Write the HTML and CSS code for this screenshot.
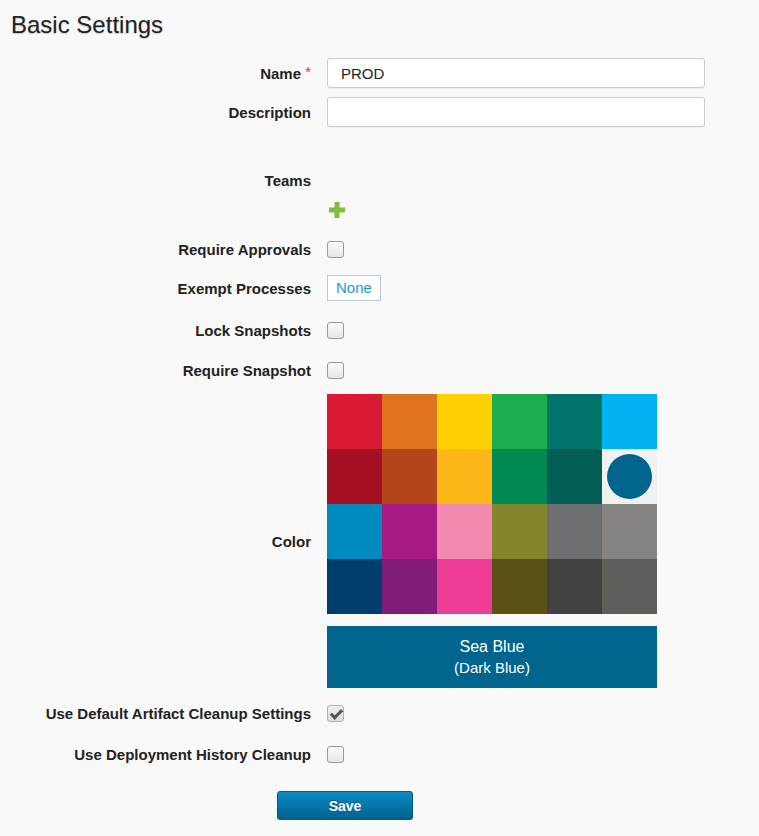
FILE: index.html
```html
<!DOCTYPE html>
<html lang="en">
<head>
<meta charset="UTF-8" />
<meta name="viewport" content="width=device-width, initial-scale=1" />
<title>Basic Settings</title>
<link rel="stylesheet" href="styles.css">
</head>
<body>
  <div class="page">
    <h1 class="title">Basic Settings</h1>

    <!-- NAME / DESCRIPTION -->
    <div class="row row-name">
      <label class="label" for="name">Name <span class="req">*</span></label>
      <div class="field"><input class="text" id="name" type="text" value="PROD"></div>
    </div>
    <div class="row row-desc">
      <label class="label" for="desc">Description</label>
      <div class="field"><input class="text" id="desc" type="text"></div>
    </div>

    <!-- TEAMS -->
    <div class="row row-teams">
      <div class="label">Teams</div>
      <div class="field"></div>
    </div>
    <div class="row row-plus">
      <div class="label"></div>
      <div class="field">
        <svg class="plus" width="18" height="18" viewBox="0 0 18 18">
          <path d="M6.5 1h5v5.5H17v5h-5.5V17h-5v-5.5H1v-5h5.5z" fill="#82bc3f"/>
        </svg>
      </div>
    </div>

    <div class="row row-approvals">
      <label class="label">Require Approvals</label>
      <div class="field"><input type="checkbox" class="check"></div>
    </div>
    <div class="row row-exempt">
      <div class="label">Exempt Processes</div>
      <div class="field"><span class="none-box">None</span></div>
    </div>
    <div class="row row-lock">
      <label class="label">Lock Snapshots</label>
      <div class="field"><input type="checkbox" class="check"></div>
    </div>
    <div class="row row-snapshot">
      <label class="label">Require Snapshot</label>
      <div class="field"><input type="checkbox" class="check"></div>
    </div>

    <!-- COLOR -->
    <div class="row row-color">
      <div class="label">Color</div>
      <div class="field">
        <div class="swatches">
          <div class="swatch" style="background:#da1a32"></div>
          <div class="swatch" style="background:#de741e"></div>
          <div class="swatch" style="background:#ffd100"></div>
          <div class="swatch" style="background:#1aaf4c"></div>
          <div class="swatch" style="background:#00746b"></div>
          <div class="swatch" style="background:#00b3f0"></div>
          <div class="swatch" style="background:#a50f22"></div>
          <div class="swatch" style="background:#b44419"></div>
          <div class="swatch" style="background:#feb718"></div>
          <div class="swatch" style="background:#008852"></div>
          <div class="swatch" style="background:#005e57"></div>
          <div class="swatch selected"><span class="dot"></span></div>
          <div class="swatch" style="background:#008bbf"></div>
          <div class="swatch" style="background:#a81a86"></div>
          <div class="swatch" style="background:#f28ab0"></div>
          <div class="swatch" style="background:#84842c"></div>
          <div class="swatch" style="background:#6d6e70"></div>
          <div class="swatch" style="background:#858480"></div>
          <div class="swatch" style="background:#003f6b"></div>
          <div class="swatch" style="background:#811c7b"></div>
          <div class="swatch" style="background:#ee3d96"></div>
          <div class="swatch" style="background:#5b5115"></div>
          <div class="swatch" style="background:#414141"></div>
          <div class="swatch" style="background:#605e5a"></div>
        </div>
        <div class="color-name">
          <div class="color-main">Sea Blue</div>
          <div class="color-sub">(Dark Blue)</div>
        </div>
      </div>
    </div>

    <!-- CLEANUP -->
    <div class="row row-artifact">
      <label class="label">Use Default Artifact Cleanup Settings</label>
      <div class="field"><input type="checkbox" class="check" checked></div>
    </div>
    <div class="row row-history">
      <label class="label">Use Deployment History Cleanup</label>
      <div class="field"><input type="checkbox" class="check"></div>
    </div>

    <div class="actions">
      <button class="save">Save</button>
    </div>
  </div>
</body>
</html>
```

FILE: styles.css
```css
html, body {
  margin: 0;
  padding: 0;
  background: #f9f9f9;
  color: #222;
  font-family: 'Liberation Sans', Arial, sans-serif;
  font-size: 14px;
}
.page {
  padding: 11px 0 0 0;
}
.title {
  margin: 0 0 0 11px;
  height: 47px;
  font-size: 24px;
  font-weight: normal;
  line-height: 28px;
  color: #222;
  text-shadow: 0 1px 1px rgba(0,0,0,0.2);
}
.row {
  display: flex;
  align-items: center;
  height: 26px;
}
.label {
  width: 311px;
  text-align: right;
  font-size: 15px;
  font-weight: bold;
  color: #222;
  flex-shrink: 0;
}
.field {
  margin-left: 16px;
  display: flex;
  align-items: center;
}
.req {
  color: #e8332f;
  font-size: 15px;
  font-weight: normal;
  position: relative;
  top: -2px;
}
.row-name { height: 30px; }
.row-desc { height: 30px; margin-top: 9px; }
.row-teams { height: 20px; margin-top: 43px; }
.row-plus { height: 20px; margin-top: 10px; }
.row-approvals { margin-top: 16px; }
.row-exempt { margin-top: 13px; }
.row-lock { margin-top: 16px; }
.row-snapshot { margin-top: 14px; }
.row-color { height: auto; margin-top: 11px; }
.row-color .field { flex-direction: column; align-items: stretch; }
.row-artifact { margin-top: 12px; }
.row-history { margin-top: 15px; }

.text {
  box-sizing: border-box;
  width: 378px;
  height: 30px;
  margin: 0;
  padding: 0 13px;
  border: 1px solid #cccccc;
  border-radius: 3px;
  background: #fff;
  font-family: inherit;
  font-size: 15px;
  color: #222;
  box-shadow: 0 1px 1px rgba(0,0,0,0.04);
}
.plus {
  display: block;
  margin-left: 1px;
}
.check {
  appearance: none;
  -webkit-appearance: none;
  box-sizing: border-box;
  width: 17px;
  height: 17px;
  margin: 0;
  border: 1px solid #9a9a9a;
  border-radius: 3px;
  background: linear-gradient(#fbfbfb, #e6e6e6);
  cursor: pointer;
  position: relative;
}
.check:checked {
  background: linear-gradient(#eeeeee, #dcdcdc);
  border-color: #b0b0b0;
}
.check:checked::after {
  content: '';
  position: absolute;
  left: 5px;
  top: 1px;
  width: 4px;
  height: 9px;
  border: solid #555;
  border-width: 0 3px 3px 0;
  transform: rotate(45deg);
}
.none-box {
  box-sizing: border-box;
  display: inline-block;
  height: 26px;
  line-height: 24px;
  padding: 0 8px;
  border: 1px solid #b9c9d6;
  background: #fff;
  color: #1d9ad6;
  font-size: 15px;
}
.swatches {
  display: grid;
  grid-template-columns: repeat(6, 55px);
  grid-auto-rows: 55px;
  width: 330px;
}
.swatch.selected {
  background: #f1f1f1;
  display: flex;
  align-items: center;
  justify-content: center;
}
.dot {
  width: 45px;
  height: 45px;
  border-radius: 50%;
  background: #00648c;
}
.color-name {
  width: 330px;
  height: 62px;
  margin-top: 12px;
  background: #00648c;
  color: #fff;
  text-align: center;
  box-sizing: border-box;
  padding-top: 11px;
}
.color-main {
  font-size: 16px;
  line-height: 20px;
}
.color-sub {
  font-size: 15px;
  line-height: 22px;
}
.actions {
  margin-top: 24px;
  padding-left: 277px;
}
.save {
  width: 136px;
  height: 29px;
  border: 1px solid #005a85;
  border-radius: 3px;
  background: linear-gradient(#0a8cc2, #00618f);
  color: #fff;
  font-family: inherit;
  font-size: 14px;
  font-weight: bold;
  text-shadow: 0 -1px 0 rgba(0,0,0,0.25);
  box-shadow: 0 1px 1px rgba(0,0,0,0.2);
  cursor: pointer;
}
```
